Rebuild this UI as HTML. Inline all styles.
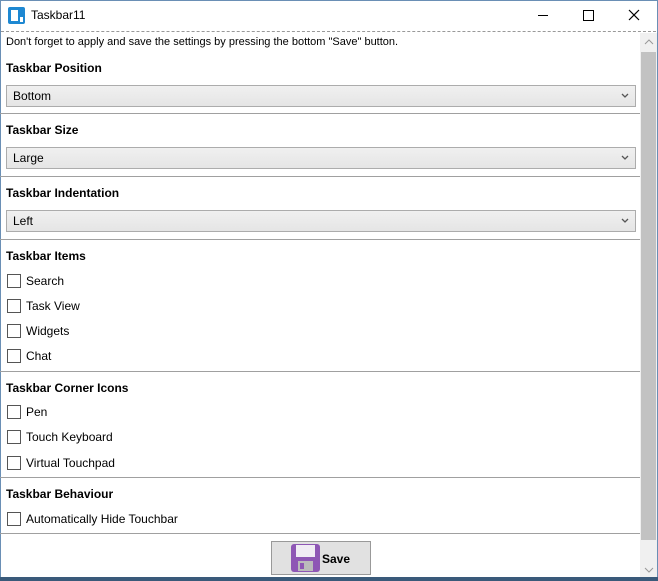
<!DOCTYPE html><html><head><style>
body{margin:0;width:658px;height:581px;overflow:hidden;background:#fff;font-family:"Liberation Sans",sans-serif;font-size:12px;color:#000;position:relative}
.a{position:absolute;white-space:nowrap}
.h{font-weight:bold}
.cb{position:absolute;left:7px;width:12px;height:12px;border:1px solid #555;background:#fff}
.combo{position:absolute;left:6px;width:628px;height:20px;border:1px solid #acacac;background:linear-gradient(#f0f0f0,#e5e5e5)}
.combo span{position:absolute;left:6px;top:3px}
.combo svg{position:absolute;right:6px;top:7px}
.sep{position:absolute;left:0;width:640px;height:1px;background:#a0a0a0}
</style></head><body>
<div class="a" style="left:0;top:0;width:656px;height:579px;border:1px solid #6a8fb5"></div>
<svg class="a" style="left:8px;top:7px" width="18" height="18"><rect x="0" y="0" width="17" height="17" rx="2" fill="#1e88d2"/><rect x="3" y="3" width="7" height="11" fill="#fff"/><rect x="12" y="10" width="3" height="5" fill="#fff"/></svg>
<div class="a" style="left:31px;top:8px;font-size:12px">Taskbar11</div>
<div class="a" style="left:538px;top:15px;width:10px;height:1px;background:#000"></div>
<div class="a" style="left:583px;top:10px;width:9px;height:9px;border:1px solid #000"></div>
<svg class="a" style="left:628px;top:9px" width="12" height="12"><path d="M1 1L11 11M11 1L1 11" stroke="#000" stroke-width="1.2"/></svg>
<div class="a" style="left:1px;top:31px;width:655px;border-top:1px dashed #999"></div>
<div class="a" style="left:640px;top:33px;width:17px;height:545px;background:#f0f0f0"></div>
<div class="a" style="left:641px;top:52px;width:15px;height:488px;background:#c2c2c2"></div>
<svg class="a" style="left:644px;top:38px" width="10" height="8"><path d="M1 6L5 2L9 6" stroke="#999" fill="none"/></svg>
<svg class="a" style="left:644px;top:566px" width="10" height="8"><path d="M1 2L5 6L9 2" stroke="#999" fill="none"/></svg>
<div class="a" style="left:6px;top:36px;font-size:11px">Don't forget to apply and save the settings by pressing the bottom "Save" button.</div>
<div class="a h" style="left:6px;top:61px">Taskbar Position</div>
<div class="combo" style="top:85px"><span>Bottom</span><svg width="8" height="6"><path d="M1 1L4 4L7 1" stroke="#555" fill="none" stroke-width="1.3"/></svg></div>
<div class="sep" style="top:113px"></div>
<div class="a h" style="left:6px;top:123px">Taskbar Size</div>
<div class="combo" style="top:147px"><span>Large</span><svg width="8" height="6"><path d="M1 1L4 4L7 1" stroke="#555" fill="none" stroke-width="1.3"/></svg></div>
<div class="sep" style="top:176px"></div>
<div class="a h" style="left:6px;top:186px">Taskbar Indentation</div>
<div class="combo" style="top:210px"><span>Left</span><svg width="8" height="6"><path d="M1 1L4 4L7 1" stroke="#555" fill="none" stroke-width="1.3"/></svg></div>
<div class="sep" style="top:239px"></div>
<div class="a h" style="left:6px;top:249px">Taskbar Items</div>
<div class="cb" style="top:274px"></div><div class="a" style="left:26px;top:274px">Search</div>
<div class="cb" style="top:299px"></div><div class="a" style="left:26px;top:299px">Task View</div>
<div class="cb" style="top:324px"></div><div class="a" style="left:26px;top:324px">Widgets</div>
<div class="cb" style="top:349px"></div><div class="a" style="left:26px;top:349px">Chat</div>
<div class="sep" style="top:371px"></div>
<div class="a h" style="left:6px;top:381px">Taskbar Corner Icons</div>
<div class="cb" style="top:405px"></div><div class="a" style="left:26px;top:405px">Pen</div>
<div class="cb" style="top:430px"></div><div class="a" style="left:26px;top:430px">Touch Keyboard</div>
<div class="cb" style="top:456px"></div><div class="a" style="left:26px;top:456px">Virtual Touchpad</div>
<div class="sep" style="top:477px"></div>
<div class="a h" style="left:6px;top:487px">Taskbar Behaviour</div>
<div class="cb" style="top:512px"></div><div class="a" style="left:26px;top:512px">Automatically Hide Touchbar</div>
<div class="sep" style="top:533px"></div>
<div class="a" style="left:271px;top:541px;width:98px;height:32px;border:1px solid #999;background:#e1e1e1"></div>
<svg class="a" style="left:291px;top:544px" width="30" height="28"><rect x="0" y="0" width="29" height="28" rx="3" fill="#8e57b5"/><rect x="5" y="1" width="19" height="12" fill="#f0ecf4"/><rect x="7" y="17" width="15" height="10" fill="#bbb"/><rect x="9" y="19" width="4" height="6" fill="#8e57b5"/></svg>
<div class="a h" style="left:322px;top:552px">Save</div>
<div class="a" style="left:0;top:577px;width:658px;height:4px;background:#3a5a7a"></div>
</body></html>
